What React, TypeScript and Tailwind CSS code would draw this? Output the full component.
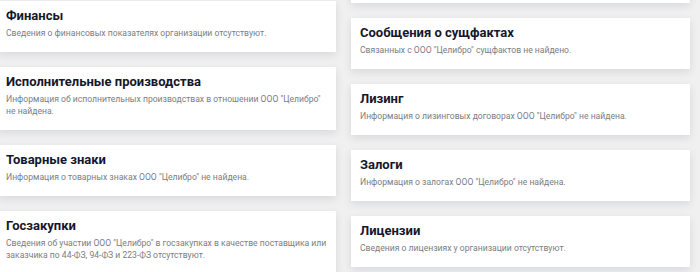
const left = [
  {
    title: 'Финансы',
    text: 'Сведения о финансовых показателях организации отсутствуют.',
  },
  {
    title: 'Исполнительные производства',
    text: 'Информация об исполнительных производствах в отношении ООО "Целибро" не найдена.',
  },
  {
    title: 'Товарные знаки',
    text: 'Информация о товарных знаках ООО "Целибро" не найдена.',
  },
  {
    title: 'Госзакупки',
    text: 'Сведения об участии ООО "Целибро" в госзакупках в качестве поставщика или заказчика по 44-ФЗ, 94-ФЗ и 223-ФЗ отсутствуют.',
  },
];

const right = [
  {
    title: 'Сообщения о сущфактах',
    text: 'Связанных с ООО "Целибро" сущфактов не найдено.',
  },
  {
    title: 'Лизинг',
    text: 'Информация о лизинговых договорах ООО "Целибро" не найдена.',
  },
  {
    title: 'Залоги',
    text: 'Информация о залогах ООО "Целибро" не найдена.',
  },
  {
    title: 'Лицензии',
    text: 'Сведения о лицензиях у организации отсутствуют.',
  },
];

function InfoCard({ title, text }: { title: string; text: string }) {
  return (
    <div className="bg-white px-[9px] pt-[7px] pb-[13px] shadow-[0_3px_8px_rgba(40,50,70,0.12)]">
      <h3 className="text-[13px] leading-[16px] font-bold text-[#15172b]">{title}</h3>
      <p className="mt-[3px] text-[8.6px] leading-[12px] text-[#7b7d84]">{text}</p>
    </div>
  );
}

export default function App() {
  return (
    <div
      className="h-[272px] w-[700px] overflow-hidden bg-[#f0f0f0]"
      style={{ fontFamily: 'Roboto, "Noto Sans", sans-serif' }}
    >
      <div className="-ml-[3px] flex items-start gap-[15px]">
        <div className="flex w-[339px] flex-col gap-[15px] pt-[1px]">
          {left.map((card) => (
            <InfoCard key={card.title} {...card} />
          ))}
        </div>
        <div className="-mt-[48px] flex w-[339px] flex-col gap-[15px]">
          <div className="h-[51px] bg-white shadow-[0_3px_8px_rgba(40,50,70,0.12)]"></div>
          {right.map((card) => (
            <InfoCard key={card.title} {...card} />
          ))}
        </div>
      </div>
    </div>
  );
}
